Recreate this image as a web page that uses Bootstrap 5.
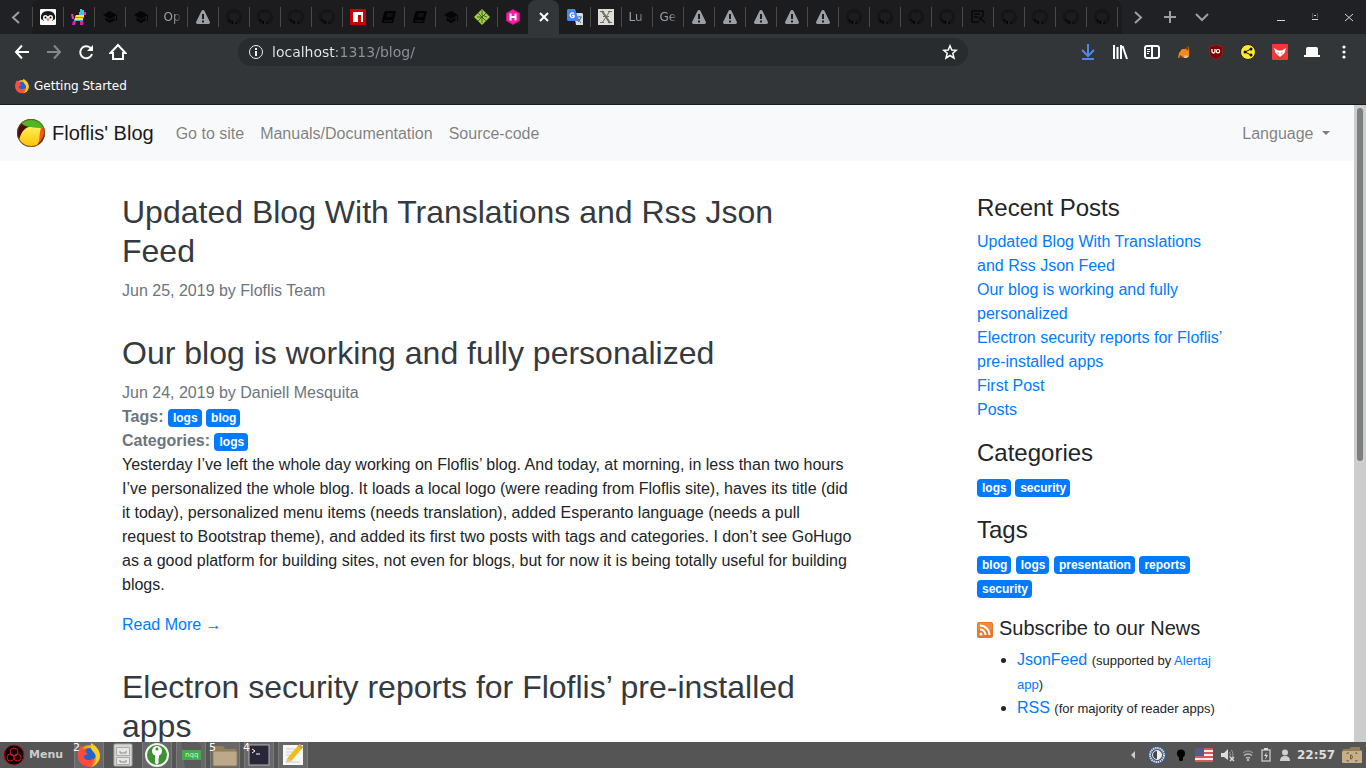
<!DOCTYPE html>
<html lang="en">
<head>
<meta charset="utf-8">
<meta name="viewport" content="width=device-width, initial-scale=1">
<title>Floflis' Blog</title>
<link rel="stylesheet" href="https://cdn.jsdelivr.net/npm/bootstrap@5.3.0/dist/css/bootstrap.min.css">
<style>
:root{--bs-body-font-family:"Liberation Sans",Arial,sans-serif;--bs-link-color:#007bff;--bs-link-color-rgb:0,123,255}
body{font-family:"Liberation Sans",Arial,sans-serif;color:#212529;background:#fff}
svg{display:block;flex:none}
button{border:0;background:none;padding:0;color:inherit}
.desktop{height:100vh}
/* browser window */
.chrome-ui{background:#323639;color:#fff;font-family:"DejaVu Sans",sans-serif;border-bottom:1px solid #1b1c1e}
.tab-row{height:34px;background:#202124;color:#9aa0a6}
.tab-scroll{width:32px;height:34px}
.tab-strip{background:#1c1b1d;border-radius:8px 8px 0 0;padding-right:5px}
.tab{position:relative;width:31px;height:34px;font-size:12px}
.tab::before{content:"";position:absolute;left:0;top:7px;width:1px;height:20px;background:#4a4a4d}
.tab-strip .tab:last-child::after{content:"";position:absolute;right:-1px;top:7px;width:1px;height:20px;background:#4a4a4d}
.tab-active{background:#323639;border-radius:8px 8px 0 0;color:#fff}
.tab-active::before,.tab-active + .tab::before{display:none}
.tab-label{width:16px;overflow:hidden;white-space:nowrap;text-align:left;-webkit-mask-image:linear-gradient(90deg,#000 60%,rgba(0,0,0,.2));mask-image:linear-gradient(90deg,#000 60%,rgba(0,0,0,.2))}
.win-btn{width:34px;height:34px}
.tool-row{height:36px;padding:0 6px}
.tool-btn{width:32px;height:32px}
.url-box{height:28px;background:#282c2f;border-radius:14px;margin:0 104px;padding:0 10px}
.url-input{border:0;outline:0;min-width:0;font-size:14px;padding:0;margin-left:8px;height:24px;color:transparent;background:linear-gradient(90deg,#e8eaed 65px,#8e9499 65px);-webkit-background-clip:text;background-clip:text}
.bookmark-row{height:34px;padding:0 14px 2px;font-size:12px}
.bookmark-row a{color:#fff;text-decoration:none;gap:4px}
/* page */
.page-view{min-height:0}
.page-body{min-width:0;overflow:hidden}
.page-body a{text-decoration:none}
.scroll-track{width:12px;background:#cdcdcd;padding:3px}
.scroll-thumb{height:56%;border-radius:3px;background:#7c7f80}
.site-nav{background:#f8f9fa}
.site-nav .navbar-brand{gap:6px;margin-right:14px;color:#1a1a1a}
.site-nav .nav-link{padding-top:9px;padding-bottom:7px;color:rgba(0,0,0,.5)}
.blog-grid,.blog-grid .row{--bs-gutter-x:30px}
.blog-grid{padding-top:32px}
.post{margin-bottom:31px}
.post h2{font-size:32px;line-height:39px}
.post h2 a{color:#343a40}
.post-meta{color:#6c757d}
.tagmark{font-size:12px;padding:3px 4px 3px 5px;border-radius:4px;background:#007bff;color:#fff}
.aside-title{font-size:24px;line-height:29px}
.feed-title{font-size:20px;gap:6px}
.feed-list{padding-left:40px}
.note{font-size:13px}
/* desktop panel */
.panel{height:26px;background:#555;color:#ddd;font-family:"DejaVu Sans",sans-serif;overflow:hidden}
.menu-btn{font-size:11px;font-weight:700;gap:4px;padding-left:3px;width:70px;color:#ccc}
.task-list{gap:4px;padding-left:4px}
.task{position:relative;width:30px;height:26px;background:#686868;border:1px solid #7b7b7b;border-width:0 1px}
.task-plain{background:none;border-color:transparent}
.task-count{position:absolute;left:-2px;top:0;font-size:11px;line-height:12px;color:#fff}
.tray button{height:26px}
.clock{font-size:12px;font-weight:700;width:41px;margin-left:2px}
</style>
</head>
<body>
<svg width="0" height="0" class="position-absolute" aria-hidden="true">
<defs>
<linearGradient id="foxFire" x1="1" y1="0" x2="0" y2="1"><stop offset="0" stop-color="#ffe52a"/><stop offset=".45" stop-color="#ff8a16"/><stop offset="1" stop-color="#f5156c"/></linearGradient>
<linearGradient id="gold" x1="0" y1="0" x2="0" y2="1"><stop offset="0" stop-color="#ffee58"/><stop offset="1" stop-color="#ffc400"/></linearGradient>
<symbol id="i-cap" viewBox="0 0 16 16"><path fill="#050505" d="M8 2 1 6l7 4 7-4zM3.500 8.500v3L8 14l4.500-2.500v-3L8 11zM14 7v5h1V6z"/></symbol>
<symbol id="i-warn" viewBox="0 0 16 16"><path fill="#9aa0a6" d="M8 1 a1.500 1.500 0 0 1 1.400.8l5.400 11a1.500 1.500 0 0 1-1.300 2.200h-11a1.500 1.500 0 0 1-1.300-2.200l5.400-11A1.500 1.500 0 0 1 8 1z"/><path stroke="#1c1b1d" stroke-width="2" d="M8 5v5M8 11.500v2"/></symbol>
<symbol id="i-git" viewBox="0 0 16 16"><path fill="#151516" fill-rule="evenodd" d="M8 0C3.580 0 0 3.580 0 8c0 3.540 2.290 6.530 5.470 7.590.4.070.55-.17.55-.38v-1.490c-2.230.48-2.700-.95-2.700-.95-.36-.92-.89-1.170-.89-1.170-.73-.5.050-.49.050-.49.800.060 1.230.830 1.230.830.710 1.220 1.870.870 2.330.660.070-.52.280-.87.500-1.070-1.780-.2-3.640-.89-3.640-3.950 0-.87.310-1.590.82-2.150-.08-.2-.36-1.020.080-2.120 0 0 .67-.21 2.200.82a7.600 7.600 0 0 1 4 0c1.530-1.040 2.200-.82 2.200-.82.440 1.100.160 1.920.080 2.120.510.560.820 1.270.820 2.150 0 3.070-1.870 3.750-3.650 3.950.290.250.540.730.540 1.480v2.200c0 .21.150.46.550.38A8 8 0 0 0 8 0z"/><path stroke="#000" fill="none" d="M2 11h1.500l1 2h2M6.500 15v-3M10 15v-2"/></symbol>
<symbol id="i-book" viewBox="0 0 16 16"><path fill="#030303" d="M5 2h10l-3 12H2a2 2 0 0 1-1-2.500L3.200 3.500A2 2 0 0 1 5 2z"/><path stroke="#202022" d="M6 5h6M5.500 7h6M3 12h8"/></symbol>
<symbol id="i-fox" viewBox="0 0 24 24"><circle cx="12" cy="13" r="10" fill="url(#foxFire)"/><circle cx="12.500" cy="11.500" r="6" fill="#2364c9"/><path fill="#ff4b3a" d="M2 14C1 9 3 5 5 3c0 3 2 4 5 4-2 1-1 3 1 4-2 1-4 1-4 3 1 3 5 4 9 1 1 4-3 7-7 6-4 0-7-3-7-7z"/><path fill="#ffcd26" d="M14 1c3 2 8 5 8 12 0 5-4 9-8 10 5-4 6-10 2-14-2-2-3-4-2-8z"/></symbol>
</defs>
</svg>
<div class="desktop d-flex flex-column overflow-hidden">
<header class="chrome-ui flex-shrink-0">
  <div class="tab-row d-flex">
    <button class="tab-scroll d-flex align-items-center justify-content-center" aria-label="Scroll tabs left"><svg width="16" height="16" viewBox="0 0 16 16" fill="none" stroke="currentColor" stroke-width="2"><path d="m11 3-6 5.500 6 5.500"/></svg></button>
    <div class="tab-strip d-flex flex-shrink-0" id="tabStrip"></div>
    <button class="tab-scroll d-flex align-items-center justify-content-center" aria-label="Scroll tabs right"><svg width="16" height="16" viewBox="0 0 16 16" fill="none" stroke="currentColor" stroke-width="2"><path d="m5 3 6 5.500L5 14"/></svg></button>
    <button class="tab-scroll d-flex align-items-center justify-content-center" aria-label="New tab"><svg width="14" height="14" viewBox="0 0 14 14" stroke="currentColor" stroke-width="2"><path d="M7 1v12M1 7h12"/></svg></button>
    <button class="tab-scroll d-flex align-items-center justify-content-center" aria-label="List all tabs"><svg width="14" height="14" viewBox="0 0 14 14" fill="none" stroke="currentColor" stroke-width="2"><path d="m1 4 6 6 6-6"/></svg></button>
    <div class="ms-auto d-flex">
      <button class="win-btn d-flex align-items-center justify-content-center" aria-label="Minimize"><svg width="10" height="10" stroke="#d5d5d5"><path d="M1 8.500h8"/></svg></button>
      <button class="win-btn d-flex align-items-center justify-content-center" aria-label="Maximize"><svg width="10" height="10" stroke="#d5d5d5" fill="none"><path d="M2 7.500h6M4 3.500h2"/><path stroke="#555" d="M2.500 1v5M7.500 1v5"/></svg></button>
      <button class="win-btn d-flex align-items-center justify-content-center" aria-label="Close window"><svg width="10" height="10" stroke="#d5d5d5"><path d="m1 2 8 7M9 2 1 9"/></svg></button>
    </div>
  </div>
  <div class="tool-row d-flex align-items-center">
    <button class="tool-btn d-flex align-items-center justify-content-center" aria-label="Back"><svg width="16" height="16" viewBox="0 0 16 16" fill="none" stroke="#fff" stroke-width="2"><path d="M8 1.500 2 8l6 6.500M2 8h13"/></svg></button>
    <button class="tool-btn d-flex align-items-center justify-content-center" aria-label="Forward"><svg width="16" height="16" viewBox="0 0 16 16" fill="none" stroke="#858789" stroke-width="2"><path d="m8 1.500 6 6.500-6 6.500M14 8H1"/></svg></button>
    <button class="tool-btn d-flex align-items-center justify-content-center" aria-label="Reload"><svg width="16" height="16" viewBox="0 0 16 16" fill="none" stroke="#fff" stroke-width="2"><path d="M14 10A6 6 0 1 1 12.500 4"/><path fill="#fff" stroke="none" d="M15 1v6H9z"/></svg></button>
    <button class="tool-btn d-flex align-items-center justify-content-center" aria-label="Home"><svg width="18" height="18" viewBox="0 0 18 18" fill="none" stroke="#fff" stroke-width="2"><path d="m1.500 10 7.500-8 7.500 8H14v6H4v-6z"/></svg></button>
    <div class="url-box d-flex align-items-center flex-grow-1">
      <svg width="16" height="16" viewBox="0 0 16 16" fill="none" stroke="#eee"><circle cx="8" cy="8" r="6.500"/><path stroke-width="2" d="M8 7v5M8 4v2"/></svg>
      <input class="url-input flex-grow-1" type="text" value="localhost:1313/blog/" aria-label="Address">
      <button aria-label="Bookmark this page"><svg width="16" height="16" viewBox="0 0 16 16" fill="none" stroke="#fff" stroke-width="1.500"><path d="m8 1.800 1.800 4.200 4.500.3-3.500 3 1.200 4.700L8 11.500 4 14l1.200-4.700-3.500-3L6.200 6z"/></svg></button>
    </div>
    <button class="tool-btn d-flex align-items-center justify-content-center" aria-label="Downloads"><svg width="16" height="16" viewBox="0 0 16 16" fill="none" stroke="#4e86ea" stroke-width="2"><path d="M8 0v11M2 6l6 6 6-6M2 15h12"/></svg></button>
    <button class="tool-btn d-flex align-items-center justify-content-center" aria-label="Library"><svg width="16" height="16" viewBox="0 0 16 16" stroke="#fff" stroke-width="2"><path d="M2 1v14M5.500 3v12M9 1v14M10.500 2l4.500 13"/></svg></button>
    <button class="tool-btn d-flex align-items-center justify-content-center" aria-label="Sidebars"><svg width="16" height="16" viewBox="0 0 16 16" fill="none" stroke="#fff" stroke-width="2"><rect x="1" y="2" width="14" height="12" rx="2"/><path d="M8 2v12"/><path stroke-width="1" d="M3 5.500h3M3 7.500h3M3 9.500h2"/></svg></button>
    <button class="tool-btn d-flex align-items-center justify-content-center" aria-label="MetaMask"><svg width="14" height="14" viewBox="0 0 14 14"><path fill="#f28a1d" d="m12 1-4 3H5L2 8l-1 5 4-1 3 1 4-1z"/><path fill="#76420f" d="m12 1-1 5-3-3zM2 13l1-3 3 2z"/><path fill="#d8c3ab" d="m8 10 3 1-1 2H7z"/></svg></button>
    <button class="tool-btn d-flex align-items-center justify-content-center" aria-label="uBlock Origin"><svg width="16" height="16" viewBox="0 0 16 16"><path fill="#800000" stroke="#a33" stroke-width=".5" d="M8 .5c2 1.300 4 1.500 6.500 1.500v6c0 4-3 6-6.500 7.500C4.500 14 1.500 12 1.500 8V2C4 2 6 1.800 8 .5z"/><path fill="none" stroke="#fff" stroke-width="1.300" d="M4 5v2.500a1.500 1.500 0 0 0 3 0V5"/><circle cx="10" cy="7.200" r="1.700" fill="none" stroke="#fff" stroke-width="1.200"/></svg></button>
    <button class="tool-btn d-flex align-items-center justify-content-center" aria-label="Share"><svg width="16" height="16" viewBox="0 0 16 16"><circle cx="8" cy="8" r="7.500" fill="#ffea31" stroke="#222"/><path fill="none" stroke="#111" d="m11 5-6 3 6 3"/><g fill="#111"><circle cx="11" cy="5" r="1.500"/><circle cx="5" cy="8" r="1.500"/><circle cx="11" cy="11" r="1.500"/></g></svg></button>
    <button class="tool-btn d-flex align-items-center justify-content-center" aria-label="Fox extension"><svg width="16" height="16" viewBox="0 0 16 16"><rect width="16" height="16" rx="1" fill="#ef3838"/><path fill="#fff" d="m2 4 4 2.500h4L14 4l-1.500 5L8 13 3.500 9z"/><path fill="#ef3838" d="m5.500 8 1.500 1-1 1zM10.500 8 9 9l1 1z"/></svg></button>
    <button class="tool-btn d-flex align-items-center justify-content-center" aria-label="Hat"><svg width="16" height="16" viewBox="0 0 16 16" fill="#fff"><path d="M2 11V5q0-2 2-2h8q2 0 2 2v6h2v2H0v-2z"/></svg></button>
    <button class="tool-btn d-flex align-items-center justify-content-center" aria-label="Open menu"><svg width="4" height="14" viewBox="0 0 4 14" fill="#fff"><circle cx="2" cy="2" r="1.600"/><circle cx="2" cy="7" r="1.600"/><circle cx="2" cy="12" r="1.600"/></svg></button>
  </div>
  <div class="bookmark-row d-flex align-items-center">
    <a href="#" class="d-flex align-items-center"><svg width="16" height="16"><use href="#i-fox"/></svg>Getting Started</a>
  </div>
</header>

<div class="page-view d-flex flex-grow-1">
  <div class="page-body flex-grow-1">
    <nav class="site-nav navbar navbar-expand-md">
      <div class="container-fluid px-3">
        <a class="navbar-brand d-flex align-items-center" href="#">
          <svg width="30" height="30" viewBox="0 0 30 30"><circle cx="15" cy="15" r="14" fill="#4e0c08"/><path fill="#ee5a1c" d="M22 8l6 1q2 8-4 15l-6 4z"/><path fill="url(#gold)" d="M3 22C5 15 8 10 13 9q7-1 12 1c-2 5-1 11-3 17q-11 5-19-5z"/><path fill="#4eb824" d="M5 5Q14-2 24 4q3 2 4 6-9 0-13-1-6 0-10-4z"/><circle cx="15" cy="15" r="13.500" fill="none" stroke="#7b4a28" opacity=".7"/></svg>
          Floflis' Blog</a>
        <ul class="navbar-nav me-auto">
          <li class="nav-item"><a class="nav-link" href="#">Go to site</a></li>
          <li class="nav-item"><a class="nav-link" href="#">Manuals/Documentation</a></li>
          <li class="nav-item"><a class="nav-link" href="#">Source-code</a></li>
        </ul>
        <ul class="navbar-nav">
          <li class="nav-item dropdown"><a class="nav-link dropdown-toggle" href="#" role="button" data-bs-toggle="dropdown">Language </a></li>
        </ul>
      </div>
    </nav>
    <div class="container-xl blog-grid">
      <div class="row">
        <main class="col-md-8">
          <article class="post">
            <h2><a href="#">Updated Blog With Translations and Rss Json Feed</a></h2>
            <div class="post-meta">Jun 25, 2019 by Floflis Team</div>
          </article>
          <article class="post">
            <h2><a href="#">Our blog is working and fully personalized</a></h2>
            <div class="post-meta">Jun 24, 2019 by Daniell Mesquita<br>
              <strong>Tags:</strong> <a href="#" class="badge tagmark">logs</a> <a href="#" class="badge tagmark">blog</a><br>
              <strong>Categories:</strong> <a href="#" class="badge tagmark">logs</a></div>
            <p>Yesterday I’ve left the whole day working on Floflis’ blog. And today, at morning, in less than two hours I’ve personalized the whole blog. It loads a local logo (were reading from Floflis site), haves its title (did it today), personalized menu items (needs translation), added Esperanto language (needs a pull request to Bootstrap theme), and added its first two posts with tags and categories. I don’t see GoHugo as a good platform for building sites, not even for blogs, but for now it is being totally useful for building blogs.</p>
            <a href="#">Read More →</a>
          </article>
          <article class="post">
            <h2><a href="#">Electron security reports for Floflis’ pre-installed apps</a></h2>
          </article>
        </main>
        <aside class="col-md-3 offset-md-1">
          <section>
            <h4 class="aside-title">Recent Posts</h4>
            <ul class="list-unstyled mb-3">
              <li><a href="#">Updated Blog With Translations and Rss Json Feed</a></li>
              <li><a href="#">Our blog is working and fully personalized</a></li>
              <li><a href="#">Electron security reports for Floflis’ pre-installed apps</a></li>
              <li><a href="#">First Post</a></li>
              <li><a href="#">Posts</a></li>
            </ul>
          </section>
          <section>
            <h4 class="aside-title">Categories</h4>
            <p><a href="#" class="badge tagmark">logs</a> <a href="#" class="badge tagmark">security</a></p>
          </section>
          <section>
            <h4 class="aside-title">Tags</h4>
            <p><a href="#" class="badge tagmark">blog</a> <a href="#" class="badge tagmark">logs</a> <a href="#" class="badge tagmark">presentation</a> <a href="#" class="badge tagmark">reports</a> <a href="#" class="badge tagmark">security</a></p>
          </section>
          <section>
            <h5 class="feed-title d-flex align-items-center"><svg class="mt-1" width="16" height="16" viewBox="0 0 16 16"><rect width="16" height="16" rx="2" fill="#e8772e"/><rect x="1" y="1" width="14" height="7" rx="1" fill="#f29a4f" opacity=".6"/><circle cx="4" cy="12" r="1.600" fill="#fff"/><path fill="none" stroke="#fff" stroke-width="2" d="M3 7.500A5.500 5.500 0 0 1 8.500 13M3 3.500A9.500 9.500 0 0 1 12.500 13"/></svg>Subscribe to our News</h5>
            <ul class="feed-list">
              <li><a href="#">JsonFeed</a> <span class="note">(supported by <a href="#">Alertaj app</a>)</span></li>
              <li><a href="#">RSS</a> <span class="note">(for majority of reader apps)</span></li>
            </ul>
          </section>
        </aside>
      </div>
    </div>
  </div>
  <div class="scroll-track flex-shrink-0"><div class="scroll-thumb"></div></div>
</div>

<footer class="panel d-flex align-items-center flex-shrink-0">
  <button class="menu-btn d-flex align-items-center"><svg width="22" height="22" viewBox="0 0 22 22"><circle cx="11" cy="11" r="10" fill="#0a0203" stroke="#a50f16"/><g fill="none" stroke="#d0161f"><circle cx="11" cy="8" r="4"/><circle cx="7.500" cy="13.500" r="3.500"/><circle cx="14.500" cy="13.500" r="3.500"/></g></svg>Menu</button>
  <div class="task-list d-flex">
    <button class="task d-flex align-items-center justify-content-center" aria-label="Firefox, 2 windows"><svg width="26" height="26"><use href="#i-fox"/></svg><span class="task-count">2</span></button>
    <button class="task task-plain d-flex align-items-center justify-content-center" aria-label="Files"><svg width="22" height="24" viewBox="0 0 22 24"><rect x="2" y="1" width="18" height="22" rx="1" fill="#d6d6d2" stroke="#aaa"/><path fill="#e6e6e3" stroke="#aaa" d="M4.500 4.500h13v8h-13zM4.500 14.500h13v7h-13z"/><path fill="none" stroke="#888" d="M8 8v2h6V8M8 17v2h6v-2"/></svg></button>
    <button class="task d-flex align-items-center justify-content-center" aria-label="KeePass"><svg width="24" height="24" viewBox="0 0 24 24"><circle cx="12" cy="12" r="11" fill="#3f8f35" stroke="#eef4ec" stroke-width="2"/><circle cx="12" cy="8" r="5" fill="#fff"/><circle cx="12" cy="6" r="1.500" fill="#3f8f35"/><path fill="#fff" d="M10 12h4v3l-1 1 1 1-1 1 1 1-2 3-2-2z"/></svg></button>
    <button class="task d-flex align-items-center justify-content-center" aria-label="nqq"><svg width="28" height="26" viewBox="0 0 28 26"><path fill="#5b5b5b" d="M4 0h16l4 3v23H8z"/><rect x="5" y="8" width="19" height="10" fill="#3fae49"/><text x="8" y="15" font-size="7" fill="#d5f0d7">nqq</text></svg></button>
    <button class="task d-flex align-items-center justify-content-center" aria-label="Folders, 5 windows"><svg width="26" height="24" viewBox="0 0 26 24"><path fill="#94805c" d="M2 3h9l2 3h11v15H2z"/><rect x="1" y="8" width="24" height="15" rx="1" fill="#bca989" stroke="#8e7a58"/></svg><span class="task-count">5</span></button>
    <button class="task d-flex align-items-center justify-content-center" aria-label="Terminal, 4 windows"><svg width="24" height="24" viewBox="0 0 24 24"><rect x="2" y="2" width="20" height="20" fill="#292638" stroke="#b0aeb6"/><path fill="none" stroke="#fff" d="m5 6 3 2-3 2M9 11h4"/></svg><span class="task-count">4</span></button>
    <button class="task d-flex align-items-center justify-content-center" aria-label="Text editor"><svg width="24" height="24" viewBox="0 0 24 24"><path fill="#f7f7f7" d="M2 2h20v20H2z"/><path stroke="#ccc" d="M5 6h9M5 9h8M5 12h6M5 19h14"/><path stroke="#f1bc17" stroke-width="5" d="M8 17 19 4"/><path fill="#dfc69c" d="m5 20 1-5 4 3z"/><path stroke="#dd9a5a" stroke-width="5" d="m18.500 4.500 2-2"/></svg></button>
  </div>
  <div class="tray ms-auto d-flex align-items-center">
    <button class="tool-btn d-flex align-items-center justify-content-end pe-2" aria-label="Show more"><svg width="5" height="8"><path fill="#ccc" d="M5 0v8L1 4z"/></svg></button>
    <button class="px-1 d-flex align-items-center" aria-label="Brightness"><svg width="20" height="20" viewBox="0 0 20 20"><circle cx="10" cy="10" r="10" fill="#44597a"/><circle cx="10" cy="10" r="7" fill="none" stroke="#ddd" stroke-width="2" stroke-dasharray="1.500 .7"/><circle cx="10" cy="10" r="4.500" fill="#45484b" stroke="#eee"/><path fill="#eee" d="M10 5.500a4.500 4.500 0 0 1 0 9z"/></svg></button>
    <button class="px-1 d-flex align-items-center" aria-label="Night light"><svg width="12" height="14" viewBox="0 0 12 14"><circle cx="6" cy="5.500" r="4"/><path d="M4 8h4v4l-1 1H5l-1-1z"/></svg></button>
    <button class="px-1 d-flex align-items-center" aria-label="Keyboard layout"><svg width="18" height="14" viewBox="0 0 18 14"><path fill="#eee" d="M0 0h18v14H0z"/><path stroke="#d5585c" stroke-width="2" d="M0 1h18M0 5h18M0 9h18M0 13h18"/><path fill="#565a8e" d="M0 0h9v8H0z"/></svg></button>
    <button class="px-1 d-flex align-items-center" aria-label="Volume"><svg width="14" height="14" viewBox="0 0 14 14"><path fill="#ddd" d="M0 5h3l4-4v11L3 9H0z"/><path fill="none" stroke="#999" d="M8.500 4q2 3 0 5M10.500 2q3 4 .5 8"/><path stroke="#ddd" stroke-width="1.500" d="m9 9 4 4m0-4-4 4"/></svg></button>
    <button class="px-1 d-flex align-items-center" aria-label="Network"><svg width="10" height="14" viewBox="0 0 10 14" fill="none" stroke="#bbb" stroke-width="1.500"><path stroke="#888" d="M0 5q5-4 10 0"/><path d="M1 7.500q4-3 8 0M3 10q2-1 4 0"/><circle cx="5" cy="12" r=".5"/></svg></button>
    <button class="px-1 d-flex align-items-center" aria-label="Battery"><svg width="10" height="14" viewBox="0 0 10 14"><path fill="none" stroke="#bbb" stroke-width="1.500" d="M1 2h8v11H1z"/><path fill="#ddd" d="M3 0h4v2H3zM6 4 3 8h2l-1 4 3-5H5z"/></svg></button>
    <button class="px-1 d-flex align-items-center" aria-label="User"><svg width="12" height="12" viewBox="0 0 12 12" fill="#d0d0d0"><circle cx="6" cy="3.500" r="3"/><path d="M1 12q0-5 5-5t5 5z"/></svg></button>
    <span class="clock">22:57</span>
    <button class="px-1 d-flex align-items-center" aria-label="Places"><svg width="20" height="18" viewBox="0 0 20 18"><path fill="#937e58" d="M1 3h6l2-2h9v3h2v13H1z"/><rect x="0" y="5" width="20" height="12" rx="1" fill="#c6b087"/><path fill="none" stroke="#6e5c3d" d="M5 8V7h2M13 7h2v1M5 14v1h2M13 15h2v-1M8.500 9v4h1q2-2 0-4z"/></svg></button>
  </div>
</footer>
</div>
<script>
/* favicons of the open tabs, in strip order */
const use = id => `<svg width="16" height="16"><use href="#i-${id}"/></svg>`;
const draw = body => `<svg width="16" height="16" viewBox="0 0 16 16">${body}</svg>`;
const label = t => `<span class="tab-label">${t}</span>`;
const cap = use('cap'), warn = use('warn'), git = use('git'), book = use('book');
const penguin = draw('<rect width="16" height="16" rx="1" fill="#fff"/><path fill="#1b1b1b" d="M1 10Q0 2 8 2t7 8l-3 2H4z"/><path fill="#fff" d="M3 9q0-3 2.500-3Q7 6 8 7.500 9 6 10.500 6 13 6 13 9q0 4-5 4T3 9z"/><circle cx="5.500" cy="8.500" r="1"/><circle cx="10.500" cy="8.500" r="1"/><path fill="#e6734f" d="M6 9.500h4l-2 3z"/>');
const pinata = draw('<path fill="#35c7ee" d="M9 0h2v1h2v5H8V3h1z"/><path fill="#f02cc0" d="M13 3h2v3h-2zM0 5h2l1 3v2H1z"/><path fill="#ffe62b" d="M5 6h8v2H4zM4 9h8v2H3z"/><path fill="#f5731d" d="M4 8h9v1H4z"/><path fill="#38b8e4" d="M3 11h9v1H3z"/><path fill="#e914c8" d="M2 12h3l-1 4H1zM9 12h3v4h-3z"/>');
const npm = draw('<path fill="#cb0000" d="M0 0h16v16H0z"/><path fill="#fff" d="M3 3h10v10h-2V6H8v7H3z"/>');
const green = draw('<path fill="#a2d045" d="m8 0 8 8-8 8-8-8z"/><path fill="none" stroke="#2f4a17" stroke-width=".8" d="m4 4 8 8M12 4l-8 8M8 1v5l5 2M3 8h5v6"/>');
const hugo = draw('<path fill="#ff1aa5" stroke="#c2117c" d="m8 .5 6.500 3.700v7.600L8 15.500l-6.500-3.700V4.200z"/><path stroke="#fff" stroke-width="2" d="M5.500 4.500v7M10.500 4.500v7M5 8h6"/>');
const close = draw('<path stroke="currentColor" stroke-width="2" d="m4 4 8 8M12 4l-8 8"/>');
const translate = draw('<path fill="#dadce0" d="M7 4h8l1 1v11H9z"/><path fill="#4285f4" d="M1 0h7l4 12H1l-1-1V1z"/><path fill="none" stroke="#fff" stroke-width="1.300" d="M7 4.500A2.300 2.300 0 1 0 7 8V6.500H5"/><path stroke="#60788a" d="M10 8h5M12.500 7v1M14 8q-1 4-3 5M11 10l3 4"/>');
const xicon = draw('<path fill="#deded8" d="M0 0h16v16H0z"/><path fill="none" stroke="#716b61" stroke-width="2" d="m4 2 8 12"/><path stroke="#716b61" d="M12 2 4 14M2 2.500h4M10 2.500h4M2 13.500h4M10 13.500h4M5 7.500h6"/>');
const note = draw('<path fill="none" stroke="#090909" stroke-width="1.500" d="M9 13H2V2h11v6M4 5h6M4 8h4M9 8l6 6M12 8l-3 3"/>');
const tabs = [[penguin,'Penguin'],[pinata,'Piñata'],[cap,'Course'],[cap,'Course'],[label('Op'),''],[warn,'Problem loading page'],
  ...Array(4).fill([git,'GitHub']),[npm,'npm'],[book,'Docs'],[book,'Docs'],[cap,'Course'],[green,'Theme'],[hugo,'Hugo'],[close,'Close tab'],
  [translate,'Translate'],[xicon,'X'],[label('Lu'),''],[label('Ge'),''],...Array(5).fill([warn,'Problem loading page']),
  ...Array(4).fill([git,'GitHub']),[note,'Notes'],...Array(4).fill([git,'GitHub'])];
document.getElementById('tabStrip').innerHTML = tabs.map(([icon, name]) =>
  `<button class="tab d-flex align-items-center justify-content-center${icon === close ? ' tab-active' : ''}"${name ? ` aria-label="${name}"` : ''}>${icon}</button>`).join('');
</script>
<script src="https://cdn.jsdelivr.net/npm/bootstrap@5.3.0/dist/js/bootstrap.bundle.min.js"></script>
</body>
</html>
